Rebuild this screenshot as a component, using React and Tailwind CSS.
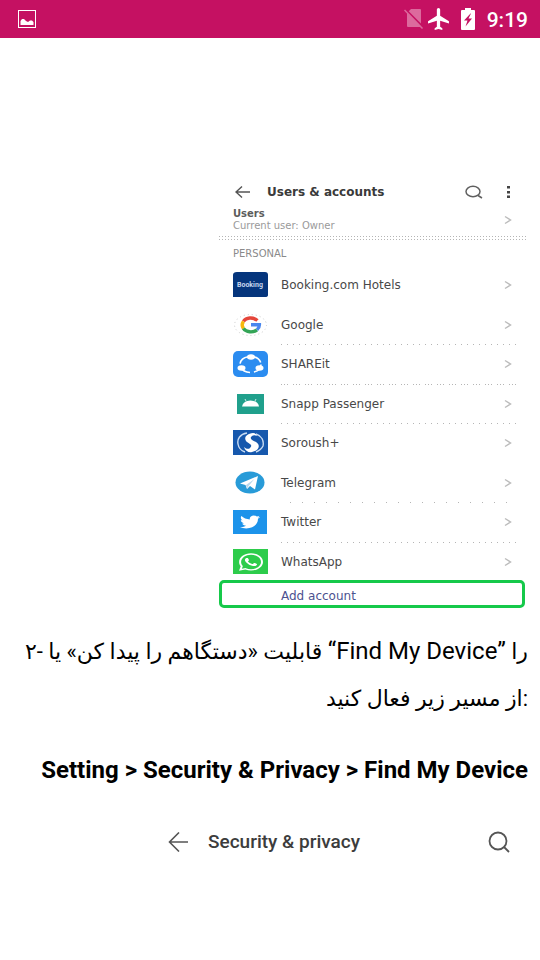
import { FaTwitter, FaWhatsapp } from "react-icons/fa";

function BookingIcon() {
  return (
    <svg viewBox="0 0 36 26" className="h-[26px] w-9">
      <path d="M4 0H32Q35 0 35 3V23Q35 25 32 25H0V3Q0 0 4 0Z" fill="#05357c" />
      <text x="4" y="15" fontSize="7" fontWeight="700" fill="#c5d5ee" fontFamily="Roboto, sans-serif">
        Booking
      </text>
    </svg>
  );
}

function GoogleIcon() {
  return (
    <svg viewBox="0 0 36 26" className="h-[26px] w-9">
      <ellipse cx="17.5" cy="13" rx="16" ry="10.5" fill="none" stroke="#c9c9c9" strokeDasharray="1 3" />
      <g fill="none" strokeWidth="3.4">
        <path d="M24.4 8.6C20 4.6 13 5.5 10.4 9.4" stroke="#e5453a" />
        <path d="M10.4 9.4Q8 13 10.4 16.4" stroke="#f7b90c" />
        <path d="M10.4 16.4C13 20.4 20 21 24 17.8" stroke="#34a557" />
        <path d="M24 17.8Q26.4 15.8 26.4 12.8H18" stroke="#4a87ee" />
      </g>
    </svg>
  );
}

function ShareitIcon() {
  return (
    <svg viewBox="0 0 36 26" className="h-[26px] w-9">
      <rect x="0" y="0" width="35" height="26" rx="5" fill="#2b8cf0" />
      <ellipse cx="17.5" cy="13.5" rx="10.5" ry="8" fill="none" stroke="#fff" strokeWidth="1.6" strokeDasharray="11 4" />
      <g fill="#fff">
        <ellipse cx="18" cy="6" rx="4" ry="2.8" />
        <ellipse cx="8.5" cy="17" rx="4" ry="2.8" />
        <ellipse cx="26.5" cy="17" rx="4" ry="2.8" />
      </g>
    </svg>
  );
}

function SnappIcon() {
  return (
    <svg viewBox="0 0 36 26" className="h-[26px] w-9">
      <rect x="4" y="3" width="27" height="20" fill="#20a08c" />
      <path d="M9 15.5Q10 10 17.5 9.5Q25 10 26 15.5Z" fill="#fff" />
      <path d="M12 8L13.5 11M23 8L21.5 11" stroke="#cdeae5" />
    </svg>
  );
}

function SoroushIcon() {
  return (
    <svg viewBox="0 0 36 26" className="h-[26px] w-9">
      <rect x="0" y="0" width="35" height="25" fill="#1658ad" />
      <path d="M14 3C7 4 4 9 5 14Q6 20 12 22M23 4C29 6 31 11 30 16Q28 20 23 22" fill="none" stroke="#c9dcf3" strokeWidth="1.4" />
      <path d="M20 3C13 4 10 8 14 12C17 14 20 15 17 18C15 20 12 18 11 17C12 21 16 23 19 22C26 21 28 15 23 12C19 10 17 9 18 7Q20 4 24 6Q23 3 20 3Z" fill="#fff" />
    </svg>
  );
}

function TelegramIcon() {
  return (
    <svg viewBox="0 0 36 26" className="h-[26px] w-9">
      <ellipse cx="17" cy="12.5" rx="14.5" ry="11" fill="#289bd8" />
      <path d="M7 13.5L25 6L22 19.5L17 16L14 19L12.5 15Z" fill="#fff" />
      <path d="M13 15L21.5 9L16 15.6L14 18.4Z" fill="#b8d8ec" />
    </svg>
  );
}

function TwitterIcon() {
  return (
    <span className="flex w-9">
      <span className="flex h-6 w-[34px] items-center justify-center bg-[#1c93ea] text-white">
        <FaTwitter className="h-4 w-5" preserveAspectRatio="none" />
      </span>
    </span>
  );
}

function WhatsAppIcon() {
  return (
    <span className="flex w-9">
      <span className="flex h-[25px] w-[35px] items-center justify-center bg-[#2dcc4b] text-white">
        <FaWhatsapp className="h-5 w-6" preserveAspectRatio="none" />
      </span>
    </span>
  );
}

const accounts = [
  { name: "Booking.com Hotels", icon: BookingIcon, divider: "bg-transparent" },
  { name: "Google", icon: GoogleIcon, divider: "bg-[repeating-linear-gradient(90deg,#b5b5b5_0_1px,transparent_1px_6px)]" },
  { name: "SHAREit", icon: ShareitIcon, divider: "bg-[repeating-linear-gradient(90deg,#b5b5b5_0_1px,transparent_1px_3px,#b5b5b5_3px_4px,transparent_4px_6px,#b5b5b5_6px_7px,transparent_7px_12px)]" },
  { name: "Snapp Passenger", icon: SnappIcon, divider: "bg-[repeating-linear-gradient(90deg,#b5b5b5_0_1px,transparent_1px_6px)]" },
  { name: "Soroush+", icon: SoroushIcon, divider: "bg-transparent" },
  { name: "Telegram", icon: TelegramIcon, divider: "bg-[repeating-linear-gradient(90deg,transparent_0_9px,#b5b5b5_9px_10px,transparent_10px_12px)]" },
  { name: "Twitter", icon: TwitterIcon, divider: "bg-[repeating-linear-gradient(90deg,#b5b5b5_0_1px,transparent_1px_6px)]" },
  { name: "WhatsApp", icon: WhatsAppIcon, divider: "bg-transparent" },
];

function Chevron() {
  return (
    <svg viewBox="0 0 8 10" className="h-[10px] w-2 shrink-0" fill="none" stroke="#bcbcbc" strokeWidth="1.4">
      <path d="M1 1.5L6.5 5L1 8.5" />
    </svg>
  );
}

function StatusBar() {
  return (
    <header className="flex h-[38px] items-center bg-[#c51162] pl-[18px] pr-3 text-white">
      <svg viewBox="0 0 18 18" className="h-[18px] w-[18px]">
        <rect x="0.5" y="0.5" width="17" height="17" fill="none" stroke="#fff" />
        <path d="M2.5 15V11L4 9H6L8 11L10 12L12 10.5H14L15.5 12V15Z" fill="#fff" />
      </svg>
      <svg viewBox="0 0 20 20" className="ml-auto h-5 w-5">
        <path d="M7 0H16Q17 0 17 1V17Q17 18 16 18H4Q3 18 3 17V4Z" fill="#dc6a9d" />
        <path d="M0 -1L20 19" stroke="#c51162" strokeWidth="2" />
        <path d="M0.5 1L18.5 19.5" stroke="#dc6a9d" strokeWidth="1.5" />
      </svg>
      <svg viewBox="2 2 19 20" className="ml-1 h-[22px] w-[21px]" fill="currentColor">
        <path d="M21 16v-2l-8-5V3.5C13 2.7 12.3 2 11.5 2S10 2.7 10 3.5V9l-8 5v2l8-2.5V19l-2 1.5V22l3.5-1 3.5 1v-1.5L13 19v-5.5l8 2.5z" />
      </svg>
      <svg viewBox="0 0 14 22" className="ml-3 h-[22px] w-[14px]">
        <path d="M4 0H10V2H13Q14 2 14 3V21Q14 22 13 22H1Q0 22 0 21V3Q0 2 1 2H4Z" fill="#fff" />
        <path d="M9.5 5.5L3 12.5H6.5L4.5 18.5L11 10.5H7.5L10 5.5Z" fill="#c51162" />
      </svg>
      <span className="ml-3 pt-0.5 font-[Roboto,sans-serif] text-[21px] font-medium leading-6">9:19</span>
    </header>
  );
}

function AccountsScreen() {
  return (
    <section className="ml-auto w-[309px] font-['DejaVu_Sans',sans-serif] text-[#484848]">
      <div className="flex h-6 items-center pl-4 pr-[17px]">
        <button type="button" aria-label="Back">
          <svg viewBox="0 0 16 12" className="h-3 w-4" fill="none" stroke="#555" strokeWidth="1.4">
            <path d="M15 6H1M7 0.5L1 6L7 11.5" />
          </svg>
        </button>
        <h2 className="ml-4 text-[12px] font-bold leading-6 text-[#3a3a3a]">Users &amp; accounts</h2>
        <button type="button" aria-label="Search" className="ml-auto">
          <svg viewBox="0 0 18 14" className="h-[14px] w-[18px]" fill="none" stroke="#606060" strokeWidth="1.5">
            <ellipse cx="8" cy="6.5" rx="7" ry="5.2" />
            <path d="M13 10.5L17 13" />
          </svg>
        </button>
        <button type="button" aria-label="More" className="ml-6">
          <svg viewBox="0 0 4 12" className="h-3 w-1" fill="#444">
            <rect x="0" y="0" width="3" height="2.5" />
            <rect x="0" y="5" width="3" height="2.5" />
            <rect x="0" y="9.5" width="3" height="2.5" />
          </svg>
        </button>
      </div>
      <button type="button" className="flex w-full items-center justify-between pb-1 pl-[14px] pr-4 pt-1 text-left">
        <span className="flex flex-col">
          <span className="text-[10px] font-bold leading-3 text-[#5c5c5c]">Users</span>
          <span className="text-[10px] leading-3 text-[#9a9a9a]">Current user: Owner</span>
        </span>
        <Chevron />
      </button>
      <div className="flex flex-col gap-0.5">
        <div className="h-px bg-[repeating-linear-gradient(90deg,#b5b5b5_0_1px,transparent_1px_3px)]" />
        <div className="h-px bg-[repeating-linear-gradient(90deg,#b5b5b5_0_1px,transparent_1px_3px)]" />
      </div>
      <h3 className="pb-1.5 pl-[14px] pt-2 text-[10px] leading-3 text-[#8a8a8a]">PERSONAL</h3>
      <ul className="flex h-[316px] flex-col">
        {accounts.map(({ name, icon: Icon, divider }) => (
          <li key={name} className="flex flex-1 flex-col">
            <button type="button" className="flex w-full flex-1 items-center pl-[14px] pr-4 text-left">
              <Icon />
              <span className="ml-3 flex-1 text-[12px] leading-4">{name}</span>
              <Chevron />
            </button>
            <div className={`ml-[62px] mr-3 h-px ${divider}`} />
          </li>
        ))}
      </ul>
      <button
        type="button"
        className="-mt-0.5 flex h-7 w-[306px] items-center rounded-[5px] border-[3px] border-[#16c94a] pl-[59px] pt-1 text-[12px] font-medium leading-4 text-[#4c5290]"
      >
        Add account
      </button>
    </section>
  );
}

export default function App() {
  return (
    <div className="min-h-screen bg-white">
      <StatusBar />
      <main className="px-3 pt-[142px] font-[Roboto,'DejaVu_Sans',sans-serif] text-black">
        <AccountsScreen />
        <p className="mt-5 text-right text-[22px] leading-[47px]">
          ۲- قابلیت «دستگاهم را پیدا کن» یا <span className="text-[24px]">“Find My Device”</span> را
          <br />
          از مسیر زیر فعال کنید:
        </p>
        <p className="mt-6 text-right text-[24px] font-bold leading-[48px]">
          Setting &gt; Security &amp; Privacy &gt; Find My Device
        </p>
        <section className="ml-auto mt-6 flex h-12 w-[360px] items-center pr-[18px] text-[#3c3c3c]">
          <button type="button" aria-label="Back">
            <svg viewBox="0 0 20 20" className="h-5 w-5" fill="none" stroke="#555" strokeWidth="1.6">
              <path d="M20 10H1.5M11 0.5L1.5 10L11 19.5" />
            </svg>
          </button>
          <h2 className="ml-5 text-[19px] font-medium leading-6">Security &amp; privacy</h2>
          <button type="button" aria-label="Search" className="ml-auto">
            <svg viewBox="0 0 22 22" className="h-[22px] w-[22px]" fill="none" stroke="#555" strokeWidth="1.8">
              <circle cx="10" cy="10" r="8.5" />
              <path d="M16 16L21 21" />
            </svg>
          </button>
        </section>
      </main>
    </div>
  );
}
